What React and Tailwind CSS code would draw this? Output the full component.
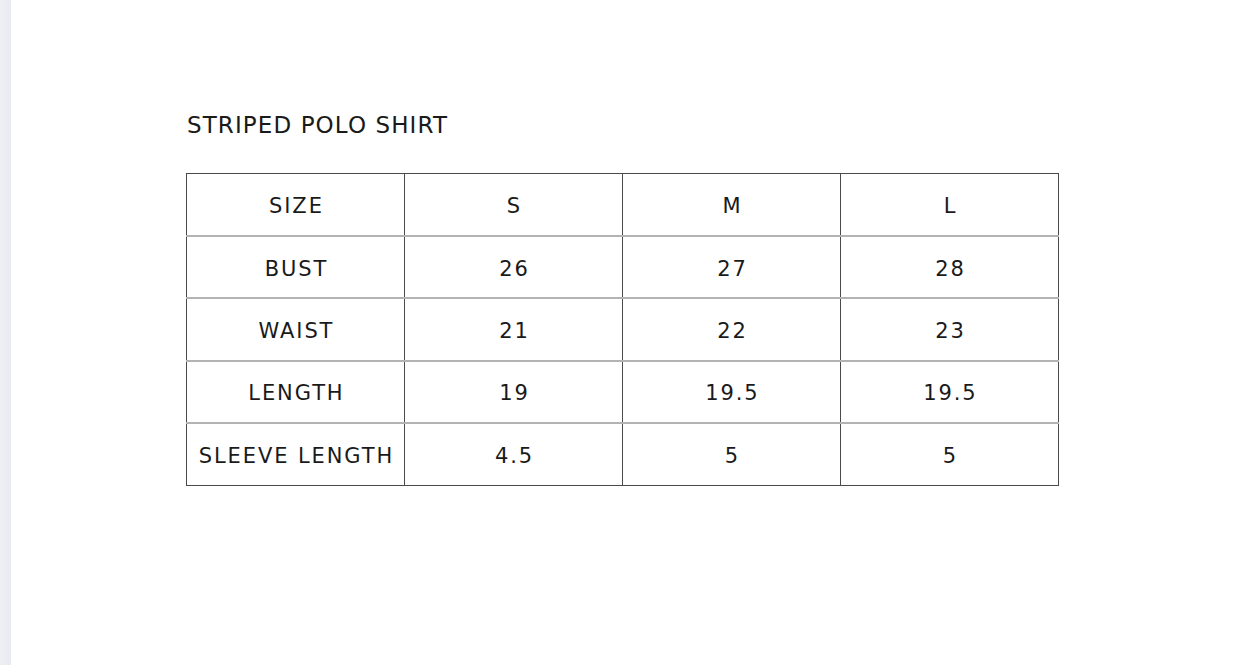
export default function App() {
  const rows = [
    ["SIZE", "S", "M", "L"],
    ["BUST", "26", "27", "28"],
    ["WAIST", "21", "22", "23"],
    ["LENGTH", "19", "19.5", "19.5"],
    ["SLEEVE LENGTH", "4.5", "5", "5"],
  ];
  return (
    <div className="flex h-[665px] w-[1234px] bg-white text-[#1a1a1a]" style={{ fontFamily: '"DejaVu Sans", sans-serif' }}>
      <div className="w-[11px] shrink-0 bg-gradient-to-r from-[#eef0f4] to-[#e8eaef]" />
      <div className="flex-1">
        <div className="mx-auto w-[873px] pt-[110px]">
          <h1 className="text-[23px] leading-[31px] font-normal pl-[1px] tracking-[1.1px]">STRIPED POLO SHIRT</h1>
          <table className="mt-[32px] w-[873px] border-collapse table-fixed">
            <tbody>
              {rows.map((r, i) => (
                <tr key={i} className="h-[62.4px]">
                  {r.map((c, j) => (
                    <td
                      key={j}
                      className={
                        "border border-[#4a4a4a] text-center align-middle text-[21px] leading-[24px] tracking-[1.9px] pl-[1.9px] pr-0 pt-[3px] pb-0 " +
                        (i > 0 ? "border-t-2 border-t-[#b3b3b3]" : "")
                      }
                    >
                      {c}
                    </td>
                  ))}
                </tr>
              ))}
            </tbody>
          </table>
        </div>
      </div>
    </div>
  );
}
